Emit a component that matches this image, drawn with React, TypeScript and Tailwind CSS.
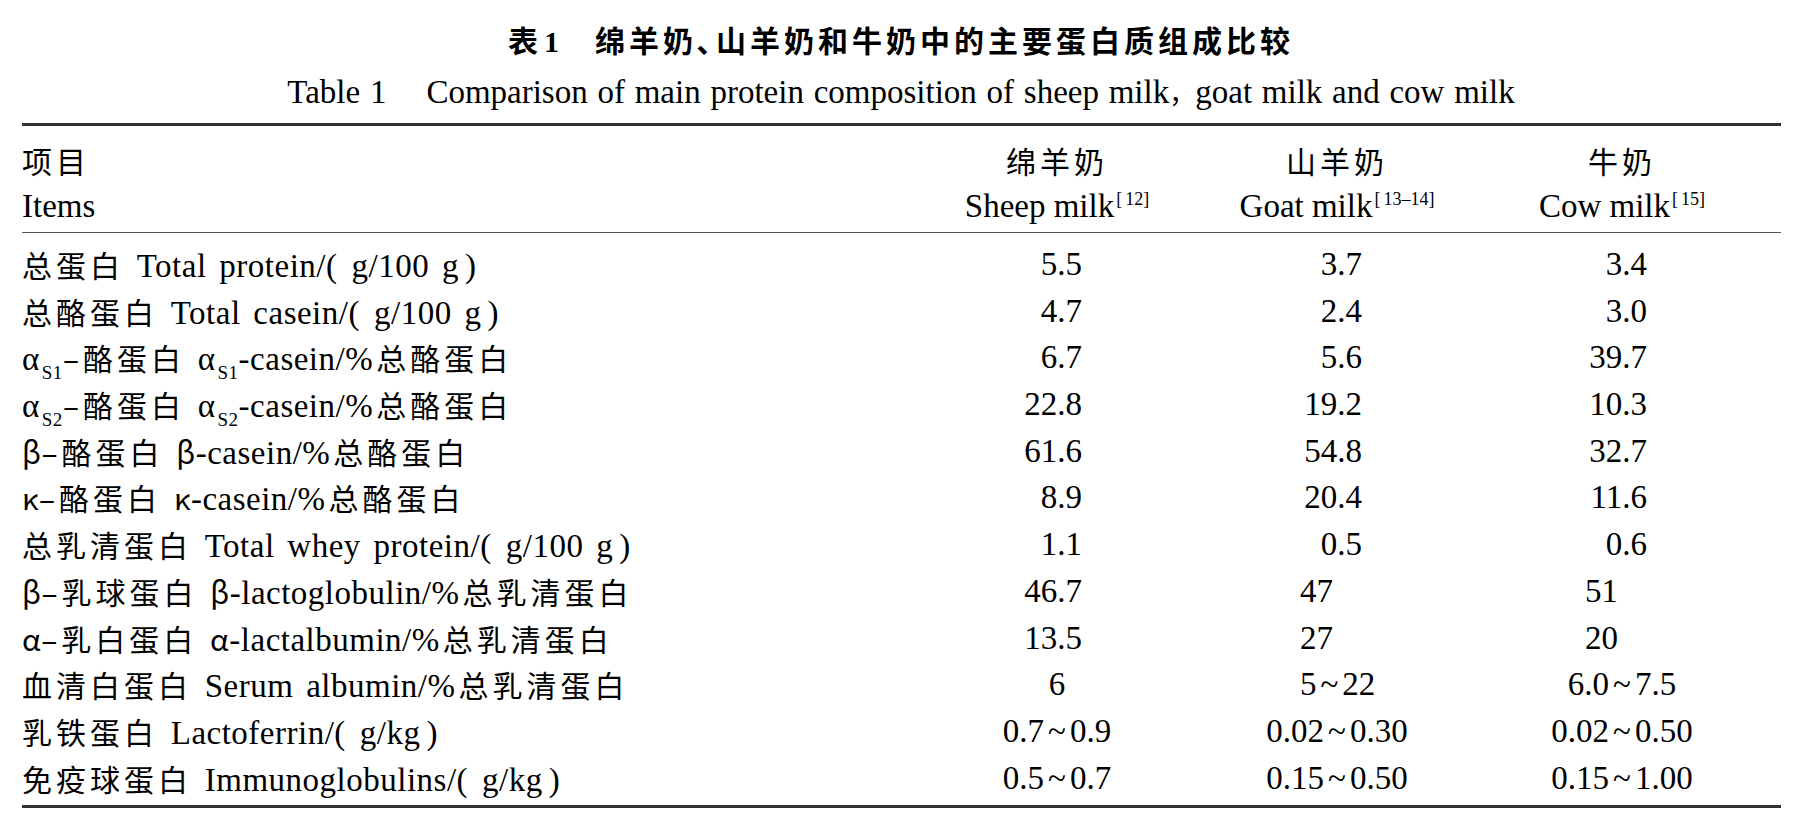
import React from 'react';

type Align = 'r' | 'l' | 'c';
type Cell = [string, Align];

const Z: React.FC<{ children: React.ReactNode; className?: string }> = ({ children, className = '' }) => (
  <span className={`font-['Noto_Sans_CJK_SC'] text-[30px] tracking-[4px] ${className}`}>{children}</span>
);

const G: React.FC<{ children: React.ReactNode }> = ({ children }) => (
  <span className="font-['Noto_Sans_CJK_SC'] text-[30px]">{children}</span>
);

const Sub: React.FC<{ children: React.ReactNode }> = ({ children }) => (
  <span className="relative top-[9px] text-[19px] ml-[2px]">{children}</span>
);

const Ref: React.FC<{ children: React.ReactNode }> = ({ children }) => (
  <span className="relative -top-[12px] text-[18px] ml-[2px]">
    [<span className="ml-[3px]">{children}</span>]
  </span>
);

const Paren: React.FC<{ children: React.ReactNode }> = ({ children }) => (
  <>
    (<span className="ml-[14px]">{children}</span>
    <span className="ml-[6px]">)</span>
  </>
);

const rows: { label: React.ReactNode; cells: Cell[] }[] = [
  {
    label: <><Z>总蛋白</Z> Total protein/<Paren>g/100 g</Paren></>,
    cells: [['5.5', 'r'], ['3.7', 'r'], ['3.4', 'r']],
  },
  {
    label: <><Z>总酪蛋白</Z> Total casein/<Paren>g/100 g</Paren></>,
    cells: [['4.7', 'r'], ['2.4', 'r'], ['3.0', 'r']],
  },
  {
    label: <>α<Sub>S1</Sub><Z>–酪蛋白</Z> α<Sub>S1</Sub>-casein/%<Z className="ml-[3px]">总酪蛋白</Z></>,
    cells: [['6.7', 'r'], ['5.6', 'r'], ['39.7', 'r']],
  },
  {
    label: <>α<Sub>S2</Sub><Z>–酪蛋白</Z> α<Sub>S2</Sub>-casein/%<Z className="ml-[3px]">总酪蛋白</Z></>,
    cells: [['22.8', 'r'], ['19.2', 'r'], ['10.3', 'r']],
  },
  {
    label: <><G>β</G><Z>–酪蛋白</Z> <G>β</G>-casein/%<Z className="ml-[3px]">总酪蛋白</Z></>,
    cells: [['61.6', 'r'], ['54.8', 'r'], ['32.7', 'r']],
  },
  {
    label: <><G>κ</G><Z>–酪蛋白</Z> <G>κ</G>-casein/%<Z className="ml-[3px]">总酪蛋白</Z></>,
    cells: [['8.9', 'r'], ['20.4', 'r'], ['11.6', 'r']],
  },
  {
    label: <><Z>总乳清蛋白</Z> Total whey protein/<Paren>g/100 g</Paren></>,
    cells: [['1.1', 'r'], ['0.5', 'r'], ['0.6', 'r']],
  },
  {
    label: <><G>β</G><Z>–乳球蛋白</Z> <G>β</G>-lactoglobulin/%<Z className="ml-[3px]">总乳清蛋白</Z></>,
    cells: [['46.7', 'r'], ['47', 'l'], ['51', 'l']],
  },
  {
    label: <><G>α</G><Z>–乳白蛋白</Z> <G>α</G>-lactalbumin/%<Z className="ml-[3px]">总乳清蛋白</Z></>,
    cells: [['13.5', 'r'], ['27', 'l'], ['20', 'l']],
  },
  {
    label: <><Z>血清白蛋白</Z> Serum albumin/%<Z className="ml-[3px]">总乳清蛋白</Z></>,
    cells: [['6', 'c'], ['5~22', 'l'], ['6.0~7.5', 'c']],
  },
  {
    label: <><Z>乳铁蛋白</Z> Lactoferrin/<Paren>g/kg</Paren></>,
    cells: [['0.7~0.9', 'c'], ['0.02~0.30', 'c'], ['0.02~0.50', 'c']],
  },
  {
    label: <><Z>免疫球蛋白</Z> Immunoglobulins/<Paren>g/kg</Paren></>,
    cells: [['0.5~0.7', 'c'], ['0.15~0.50', 'c'], ['0.15~1.00', 'c']],
  },
];

// ranges use a compact tilde with a little air on both sides
const Num: React.FC<{ v: string }> = ({ v }) => {
  const parts = v.split('~');
  if (parts.length === 1) return <>{v}</>;
  return (
    <>
      {parts[0]}
      <span className="mx-[4px]">~</span>
      {parts[1]}
    </>
  );
};

const Value: React.FC<{ cell: Cell }> = ({ cell }) => {
  const [v, a] = cell;
  if (a === 'c') {
    return (
      <div className="text-center whitespace-nowrap">
        <Num v={v} />
      </div>
    );
  }
  return (
    <div className="flex justify-center">
      <span className={`inline-block w-[62px] mr-[12px] whitespace-nowrap ${a === 'r' ? 'text-right' : 'text-left'}`}>
        <Num v={v} />
      </span>
    </div>
  );
};

export default function App() {
  return (
    <div className="w-[1802px] h-[832px] overflow-hidden bg-white text-black font-['Liberation_Serif','Noto_Sans_CJK_SC',serif]">
      {/* caption */}
      <div className="pt-[17px] text-center text-[30px] leading-[44px] font-bold">
        <span className="font-['Noto_Sans_CJK_SC']">表</span>
        <span className="ml-[6px]">1</span>
        <span className="ml-[36px] font-['Noto_Sans_CJK_SC'] tracking-[4px]">
          绵羊奶､山羊奶和牛奶中的主要蛋白质组成比较
        </span>
      </div>
      <div className="mt-[6px] text-center text-[33px] leading-[44px] [word-spacing:1.5px]">
        Table 1
        <span className="ml-[40px]">
          Comparison of main protein composition of sheep milk
          <span className="font-['Noto_Sans_CJK_SC'] text-[26px]">，</span>goat milk and cow milk
        </span>
      </div>

      <div className="ml-[22px] mt-[9px] w-[1759px] border-t-[3px] border-b-[3px] border-[#333] text-[33px]">
        <div className="grid grid-cols-[895px_280px_280px_290px] pt-[11px] pb-[3px] border-b-[1.5px] border-[#555]">
          <div>
            <div className="h-[46px] leading-[46px]"><Z>项目</Z></div>
            <div className="h-[46px] leading-[46px]">Items</div>
          </div>
          <div className="text-center">
            <div className="h-[46px] leading-[46px]"><Z>绵羊奶</Z></div>
            <div className="h-[46px] leading-[46px] whitespace-nowrap">Sheep milk<Ref>12</Ref></div>
          </div>
          <div className="text-center">
            <div className="h-[46px] leading-[46px]"><Z>山羊奶</Z></div>
            <div className="h-[46px] leading-[46px] whitespace-nowrap">Goat milk<Ref>13–14</Ref></div>
          </div>
          <div className="text-center">
            <div className="h-[46px] leading-[46px]"><Z>牛奶</Z></div>
            <div className="h-[46px] leading-[46px] whitespace-nowrap">Cow milk<Ref>15</Ref></div>
          </div>
        </div>

        <div className="pt-[8px] pb-[4px]">
          {rows.map((row, i) => (
            <div key={i} className="grid grid-cols-[895px_280px_280px_290px] h-[46.7px] leading-[46.7px]">
              <div className="whitespace-nowrap tracking-[0.5px] [word-spacing:4px]">{row.label}</div>
              {row.cells.map((c, j) => (
                <Value key={j} cell={c} />
              ))}
            </div>
          ))}
        </div>
      </div>
    </div>
  );
}
